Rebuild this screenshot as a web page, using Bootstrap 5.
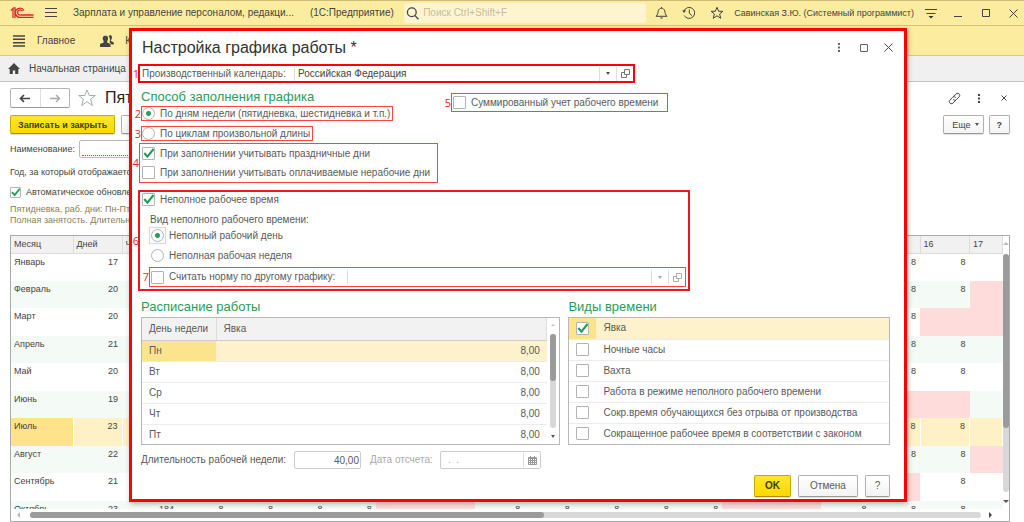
<!DOCTYPE html>
<html lang="ru">
<head>
<meta charset="utf-8">
<meta name="viewport" content="width=device-width, initial-scale=1">
<title>Настройка графика работы</title>
<link href="https://cdn.jsdelivr.net/npm/bootstrap@5.3.0/dist/css/bootstrap.min.css" rel="stylesheet">
<style>
:root{--sun:#fbec9f;--line:#b5b5b5;--ink:#444;--green:#2a9c58;--mark:#f00}
body{font:10px/14px "Liberation Sans",Arial,sans-serif;color:var(--ink);background:#fff;overflow:hidden}
svg{display:block;flex:none;fill:none;stroke:#444;stroke-width:1}
button,input{font:inherit;color:inherit}
.icon-btn{border:0;background:none;padding:0;display:flex;align-items:center;justify-content:center}
.small-text{font-size:9px;line-height:11px}
.app{min-height:100vh;position:relative}

.title-bar{height:26px;background:var(--sun);border-top:1px solid #cdbb78;border-bottom:1px solid #d3c27c;padding:0 6px 0 10px}
.title-bar .caption{font-size:10px;margin-left:16px;white-space:pre}
.search-box{background:#fef5d0;border-radius:3px;width:242px;height:20px;padding-left:2px}
.search-box input{border:0;background:none;outline:0;width:100%;padding:0 0 0 4px}
.search-box input::placeholder{color:#c4bda0;opacity:1}
.section-bar{height:30px;background:var(--sun);border-bottom:1px solid #d8c988;padding-left:13px}
.section-bar a,.tab-bar a{color:var(--ink);text-decoration:none}
.tab-bar{height:26px;background:#f0f0f0;border-bottom:1px solid #c6c6c6;padding-left:8px}

.work{padding:6px 14px 0 10px}
.nav-pair{height:20px;width:60px;border:1px solid #b4b4b4;border-bottom-color:#999;border-radius:2px}
.nav-pair button{flex:1}
.nav-pair button+button{border-left:1px solid #ddd}
.form-title{font-size:16px;line-height:20px;color:#222;font-weight:400;margin:0}
.push{height:19px;border:1px solid #b0b0b0;border-bottom-color:#999;border-radius:2px;background:linear-gradient(#fff,#f3f3f3);font-size:9px;line-height:12px;padding:0 7px;box-shadow:0 1px 1px #0002}
.push-main{background:linear-gradient(#ffe52e,#fcd900);border-color:#c9ab00;border-bottom-color:#a88f00;font-weight:700;color:#40400a}
.name-input{border:1px solid #bbb;border-radius:2px;height:18px;width:300px}
.name-input input{display:block;border:0;border-bottom:1px dotted #e33;outline:0;width:96%;height:15px;margin:0 2px}
.hint{color:#8b8052}

.tick,.dot{appearance:none;flex:none;margin:0;background:#fff no-repeat center;border:1px solid #b3b3b3;width:13px;height:13px;border-radius:1px}
.tick:checked{background-image:url("data:image/svg+xml,%3Csvg xmlns='http://www.w3.org/2000/svg' viewBox='0 0 13 13'%3E%3Cpath d='M2.3 6 5.4 9.6 11.6 2' fill='none' stroke='%231f9d55' stroke-width='2.1'/%3E%3C/svg%3E");background-origin:border-box;background-size:13px}
.tick-sm{width:11px;height:11px}
.tick-sm:checked{background-size:11px}
.dot{border-radius:50%}
.dot:checked{background-image:radial-gradient(circle,var(--green) 0 2px,#0000 3px)}

.sheet-box{margin-top:9px;border:1px solid #aaa;height:287px}
.sheet-view{height:273px;overflow:hidden}
.sheet{table-layout:fixed;width:100%;height:292px;border-collapse:collapse;font-size:9px;line-height:11px}
.sheet th{font-weight:400;background:#f1f1f1;border-right:1px solid #dcdcdc;border-bottom:1px solid #ddd;height:17px;padding:0 3px}
.sheet td{vertical-align:top;height:27px;padding:3px 4px 0;text-align:right}
.sheet td:first-child{text-align:left;padding-left:3px}
.sheet tbody tr:nth-child(even){background:#f4faf6}
.sheet tbody tr.current{background:#fef1c5}
.sheet tr.current td{border-right:1px solid #fff}
.sheet tr.current td:first-child{background:#ffe38b}
.sheet td.off{background:#ffdcdc}
.c-month{width:62px}.c-days{width:49px}.c-hours{width:56px}.c-cut{width:33px}
.v-scroll{width:12px;padding:6px 0 2px}
.sheet-box .v-scroll{padding-bottom:6px}
.rail{background:#d8d8d8;border-radius:3px;display:flex}
.rail i{background:#9b9b9b;border-radius:3px;display:block}
.v-scroll .rail{width:6px;flex-direction:column}
.h-scroll{height:12px;padding:0 17px 0 6px}
.h-scroll .rail{height:6px}
.arr{border:3px solid #0000;width:0;height:0}
.arr-u{border-bottom-color:#bbb;border-top:0}.arr-d{border-top-color:#555;border-bottom:0}
.arr-l{border-right-color:#bbb;border-left:0}.arr-r{border-left-color:#444;border-right:0}
.arr-s{border-width:2px;border-top-width:3px}

.dialog-pane{position:absolute;top:28px;left:129px;right:117px;background:#fff;border:3px solid var(--mark);height:474px;box-shadow:1px 2px 5px #0004;color:#5a5a5a}
.dialog-head{height:33px;padding:0 8px 0 10px}
.dialog-head h1{font-size:16px;line-height:20px;color:#333;margin:0;font-weight:400}
.dialog-pane h2{font-size:13px;line-height:14px;color:var(--green);margin:0;font-weight:400}
.marked{position:relative;border:1px solid #f44}
.marked-bold{border:2px solid #f0141e}
.marked>.num{position:absolute;right:100%;top:50%;margin:-6px 1px 0 0;color:#f22;font:11px/12px "Open Sans",sans-serif}
.opt{display:flex;align-items:center;gap:5px;white-space:nowrap}
.opt label{line-height:12px}
.field-in{border:0;border-left:1px solid #ddd;outline:0;background:none;min-width:0;flex:1;padding:0 3px;height:14px;color:#444}
.field-btn{width:17px;border-left:1px solid #ddd;height:14px}
.field-date .field-in{border-left:0}
.mid{padding:0 14px 0 9px;column-gap:8px}
.list-box{border:1px solid #b8b8b8;height:128px;overflow:hidden}
.list-box table{width:100%;border-collapse:collapse;table-layout:fixed}
.list-box td,.list-box th{height:21px;padding:0 7px;border-bottom:1px solid #ececec;font-weight:400;line-height:12px}
.list-box th{height:22px;background:#f2f2f2;border-color:#ccc;border-right:1px solid #ddd}
.list-box tr:last-child td{border-bottom:0}
.list-box tr.current td{background:#fdf2cb}
.list-box tr.current td:first-child{background:#fce48f}
.boxed{border:1px solid #ccc;border-radius:2px;height:18px}
.dialog-foot{padding:0 14px 0 9px}
.dialog-foot .push{height:22px;font-size:10px}
</style>
</head>
<body>
<div class="app d-flex flex-column">
  <header class="title-bar d-flex align-items-center">
    <svg width="24" height="12" viewBox="0 0 24 12" style="stroke:#e0262c;stroke-width:1.3"><path d="M.8 3.600 3 1.700V11M5 11V.8H3M14 3.400A4.600 4.600 0 1 0 11 10.300H23.500M12.500 4.300A2.600 2.600 0 1 0 11 8H23.500"/></svg>
    <button class="icon-btn" style="margin-left:11px" aria-label="Меню"><svg width="12" height="12" viewBox="0 0 12 12"><path d="M0 1.500h12M0 5.500h12M0 9.500h12"/></svg></button>
    <span class="caption">Зарплата и управление персоналом, редакци...</span>
    <span class="caption">(1С:Предприятие)</span>
    <div class="search-box d-flex align-items-center ms-auto">
      <svg width="13" height="13" viewBox="0 0 13 13" style="stroke-width:1.3"><circle cx="5.8" cy="5.3" r="4.4"/><path d="m9 8.6 3.4 3.6"/></svg>
      <input type="text" placeholder="Поиск Ctrl+Shift+F" aria-label="Поиск">
    </div>
    <button class="icon-btn" style="margin-left:9px" aria-label="Уведомления"><svg width="13" height="14" viewBox="0 0 13 14"><path d="M1 10.3h11C10 8.8 10.3 6.500 9.700 4.800 9.300 3.200 8 2.300 6.500 2.300S3.700 3.200 3.300 4.800C2.700 6.500 3 8.800 1 10.300zM6.500 1v1.300"/><path d="M4.800 11.500h3.400L6.500 13z" fill="#444" stroke="none"/></svg></button>
    <button class="icon-btn" style="margin-left:14px" aria-label="История"><svg width="14" height="14" viewBox="0 0 14 14"><path d="M2 5A5.500 5.500 0 1 1 2.300 9.500M7.300 3.500v3.800l2.500 2.200"/><path d="M.3 4.300h3.800L2 7z" fill="#444" stroke="none"/></svg></button>
    <button class="icon-btn" style="margin-left:14px" aria-label="Избранное"><svg width="14" height="14" viewBox="0 0 14 14"><path d="m7 1.300 1.700 4h4.200L9.600 8l1.200 4.300L7 9.800l-3.800 2.500L4.400 8 1.100 5.300h4.200z"/></svg></button>
    <span class="small-text text-nowrap" style="margin-left:10px">Савинская З.Ю. (Системный программист)</span>
    <button class="icon-btn" style="margin-left:11px" aria-label="Настройки"><svg width="12" height="12" viewBox="0 0 12 12"><path d="M0 2.500h12M1.500 6.500h9"/><path d="M3.500 9h5L6 11.500z" fill="#333" stroke="none"/></svg></button>
    <button class="icon-btn" style="margin-left:17px" aria-label="Свернуть"><svg width="8" height="10" viewBox="0 0 8 10"><path d="M0 8.500h8"/></svg></button>
    <button class="icon-btn" style="margin-left:20px" aria-label="Развернуть"><svg width="8" height="8" viewBox="0 0 8 8"><path d="M.5.5h7v7h-7z"/></svg></button>
    <button class="icon-btn" style="margin-left:19px" aria-label="Закрыть"><svg width="9" height="9" viewBox="0 0 9 9"><path d="m.5.500 8 8m0-8-8 8"/></svg></button>
  </header>
  <nav class="section-bar d-flex align-items-center">
    <svg width="12" height="12" viewBox="0 0 12 12" style="stroke-width:1.500"><path d="M0 1h12M0 4.300h12M0 7.700h12M0 11h12"/></svg>
    <a href="#" style="margin-left:12px">Главное</a>
    <svg width="14" height="12" viewBox="0 0 14 12" style="fill:#444;stroke:none;margin-left:25px"><path d="M8.500.8Q11-.4 12 1.500 12 4 11 5V6L13.800 7.500V9.500H11.500L9.500 7.200Q10.800 4 8.500.8z"/><path d="M2.800 2.500C3 .3 7.800.3 8 2.500 8.300 4.500 7.700 5.500 7.200 6.200V7.500L10.500 9V12H0V9L3.700 7.500V6.200C3.200 5.500 2.500 4.500 2.800 2.500z"/></svg>
    <a href="#" style="margin-left:11px">К</a>
  </nav>
  <nav class="tab-bar d-flex align-items-center">
    <svg width="12" height="11" viewBox="0 0 12 11" style="fill:#444;stroke:none"><path d="M6 0 12 6H10.300V11H7.200V7.500H4.800V11H1.700V6H0z"/></svg>
    <a href="#" style="margin-left:9px">Начальная страница</a>
  </nav>

  <main class="work flex-grow-1">
    <div class="d-flex align-items-center">
      <div class="nav-pair d-flex">
        <button class="icon-btn" aria-label="Назад"><svg width="12" height="9" viewBox="0 0 12 9" style="stroke-width:1.700"><path d="M1.500 4.500H11M5 1 1.500 4.500 5 8"/></svg></button>
        <button class="icon-btn" aria-label="Вперед"><svg width="12" height="9" viewBox="0 0 12 9" style="stroke:#aaa;stroke-width:1.400"><path d="M1 4.500h9.500M7 1l3.500 3.500L7 8"/></svg></button>
      </div>
      <svg width="18" height="18" viewBox="0 0 18 18" style="stroke:#a3a9b3;margin-left:8px"><path d="m9 1 2.300 5.500h6L12.600 10l1.700 6.500L9 12.700l-5.300 3.800L5.400 10 .7 6.500h6z"/></svg>
      <h2 class="form-title" style="margin-left:9px">Пят</h2>
      <button class="icon-btn ms-auto" aria-label="Ссылка"><svg width="13" height="13" viewBox="0 0 13 13"><path d="M5.200 4.800 7.800 2C10-.2 13.200 2.800 11 5L8.500 7.600C7.300 8.700 5.800 8.300 5.200 7.200M7.800 8.200 5.200 11C3 13.200-.2 10.200 2 8L4.500 5.400C5.700 4.300 7.200 4.700 7.800 5.800"/></svg></button>
      <button class="icon-btn" style="margin-left:17px" aria-label="Еще"><svg width="3" height="11" viewBox="0 0 3 11" style="fill:#444;stroke:none"><path d="M0 1h2v2H0zM0 4.500h2v2H0zM0 8h2v2H0z"/></svg></button>
      <button class="icon-btn" style="margin:0 3px 0 20px" aria-label="Закрыть форму"><svg width="6" height="6" viewBox="0 0 6 6"><path d="m.5.500 5 5m0-5-5 5"/></svg></button>
    </div>
    <div class="d-flex align-items-center" style="margin-top:7px">
      <button class="push push-main text-nowrap">Записать и закрыть</button>
      <button class="push" style="margin-left:6px;width:60px" aria-label="Записать"></button>
      <button class="push ms-auto d-flex align-items-center gap-1 ps-2 pe-1">Еще <i class="arr arr-d arr-s"></i></button>
      <button class="push fw-bold" style="margin-left:5px">?</button>
    </div>
    <div class="d-flex align-items-center small-text" style="margin-top:6px">
      <label for="nm">Наименование:</label>
      <div class="name-input ms-1"><input id="nm" type="text"></div>
    </div>
    <div class="small-text" style="margin-top:9px">Год, за который отображаетс</div>
    <div class="opt small-text" style="margin-top:8px"><input class="tick tick-sm" type="checkbox" id="auto" checked><label for="auto">Автоматическое обновле</label></div>
    <div class="small-text hint" style="margin-top:6px">Пятидневка, раб. дни: Пн-Пт,<br>Полная занятость. Длительн</div>

    <div class="sheet-box">
      <div class="d-flex">
        <div class="sheet-view flex-grow-1">
          <table class="sheet">
            <colgroup><col class="c-month"><col class="c-days"><col class="c-hours"><col span="16"><col class="c-cut"></colgroup>
            <thead><tr><th>Месяц</th><th>Дней</th><th>Ч</th><th colspan="14"></th><th></th><th>16</th><th>17</th></tr></thead>
            <tbody>
              <tr><td>Январь</td><td>17</td><td></td><td colspan="14"></td><td>8</td><td>8</td><td></td></tr>
              <tr><td>Февраль</td><td>20</td><td></td><td colspan="14"></td><td>8</td><td>8</td><td class="off"></td></tr>
              <tr><td>Март</td><td>20</td><td></td><td colspan="14"></td><td>8</td><td class="off"></td><td class="off"></td></tr>
              <tr><td>Апрель</td><td>21</td><td></td><td colspan="14"></td><td>8</td><td>8</td><td></td></tr>
              <tr><td>Май</td><td>20</td><td></td><td colspan="14"></td><td>8</td><td>8</td><td></td></tr>
              <tr><td>Июнь</td><td>19</td><td></td><td colspan="14"></td><td class="off"></td><td class="off"></td><td></td></tr>
              <tr class="current"><td>Июль</td><td>23</td><td></td><td colspan="14"></td><td>8</td><td>8</td><td></td></tr>
              <tr><td>Август</td><td>22</td><td></td><td colspan="14"></td><td>8</td><td>8</td><td class="off"></td></tr>
              <tr><td>Сентябрь</td><td>21</td><td></td><td colspan="14"></td><td class="off"></td><td>8</td><td></td></tr>
              <tr><td>Октябрь</td><td>23</td><td>184</td><td>8</td><td>8</td><td>8</td><td>8</td><td class="off"></td><td class="off"></td><td>8</td><td>8</td><td>8</td><td>8</td><td>8</td><td class="off"></td><td class="off"></td><td>8</td><td>8</td><td>8</td><td></td></tr>
            </tbody>
          </table>
        </div>
        <div class="v-scroll d-flex flex-column align-items-center">
          <i class="arr arr-u"></i>
          <div class="rail flex-grow-1" style="margin:9px 0 8px"><i style="height:73%"></i></div>
          <i class="arr arr-d"></i>
        </div>
      </div>
      <div class="h-scroll d-flex align-items-center">
        <i class="arr arr-l"></i>
        <div class="rail flex-grow-1" style="margin:0 8px 0 10px"><i style="width:54%"></i></div>
        <i class="arr arr-r"></i>
      </div>
    </div>
  </main>

  <section class="dialog-pane" role="dialog" aria-labelledby="dlg">
    <div class="dialog-head d-flex align-items-center">
      <h1 id="dlg">Настройка графика работы *</h1>
      <button class="icon-btn ms-auto" aria-label="Еще"><svg width="3" height="11" viewBox="0 0 3 11" style="fill:#666;stroke:none"><path d="M0 1h2v2H0zM0 4.500h2v2H0zM0 8h2v2H0z"/></svg></button>
      <button class="icon-btn" style="margin-left:19px" aria-label="Развернуть окно"><svg width="8" height="8" viewBox="0 0 8 8" style="stroke:#666"><path d="M.5.500h7v7h-7z"/></svg></button>
      <button class="icon-btn" style="margin:0 3px 0 16px" aria-label="Закрыть окно"><svg width="9" height="9" viewBox="0 0 9 9"><path d="m.5.500 8 8m0-8-8 8"/></svg></button>
    </div>

    <div class="marked marked-bold d-flex align-items-center" style="margin-left:6px;max-width:497px;height:19px;border-color:#f00">
      <span class="num">1</span>
      <label for="cal" style="width:154px;padding-left:2px">Производственный календарь:</label>
      <input class="field-in" id="cal" type="text" value="Российская Федерация">
      <button class="icon-btn field-btn" aria-label="Выбрать"><i class="arr arr-d arr-s"></i></button>
      <button class="icon-btn field-btn" aria-label="Открыть"><svg width="9" height="9" viewBox="0 0 9 9" style="stroke:#777"><path d="M3.500.5h5v5h-5zM3.500 3.500h-3v5h5v-3"/></svg></button>
    </div>

    <div class="d-flex align-items-start" style="margin:7px 0 0 9px">
      <div style="width:310px">
        <h2>Способ заполнения графика</h2>
        <div style="width:max-content;margin-top:2px;padding-right:2px" class="marked"><span class="num">2</span>
          <div class="opt"><input class="dot" type="radio" name="way" id="w1" checked><label for="w1">По дням недели (пятидневка, шестидневка и т.п.)</label></div></div>
        <div style="width:max-content;margin-top:5px;padding-right:2px" class="marked"><span class="num">3</span>
          <div class="opt"><input class="dot" type="radio" name="way" id="w2"><label for="w2">По циклам произвольной длины</label></div></div>
      </div>
      <div class="marked" style="margin-top:3px;padding:2px 9px 2px 1px"><span class="num">5</span>
        <div class="opt"><input class="tick" type="checkbox" id="sum"><label for="sum">Суммированный учет рабочего времени</label></div></div>
    </div>

    <div class="marked d-flex flex-column justify-content-around" style="margin:2px 0 0 7px;width:max-content;height:40px;padding:0 7px 0 2px"><span class="num">4</span>
      <div class="opt"><input class="tick" type="checkbox" id="hol" checked><label for="hol">При заполнении учитывать праздничные дни</label></div>
      <div class="opt"><input class="tick" type="checkbox" id="paid"><label for="paid">При заполнении учитывать оплачиваемые нерабочие дни</label></div>
    </div>

    <div class="marked marked-bold" style="margin:7px 0 0 6px;max-width:552px;padding:1px 2px 2px"><span class="num">6</span>
      <div class="opt"><input class="tick" type="checkbox" id="part" checked><label for="part">Неполное рабочее время</label></div>
      <div style="padding:7px 0 0 7px">
        <div style="padding-left:1px">Вид неполного рабочего времени:</div>
        <div class="opt" style="gap:3px"><span class="d-flex" style="border:1px solid #fbdc78;padding:1px"><input class="dot" type="radio" name="kind" id="k1" checked></span><label for="k1">Неполный рабочий день</label></div>
        <div class="opt" style="margin-top:5px;padding-left:2px"><input class="dot" type="radio" name="kind" id="k2"><label for="k2">Неполная рабочая неделя</label></div>
        <div class="marked opt" style="margin-top:5px;height:20px;padding-left:1px"><span class="num">7</span>
          <input class="tick" type="checkbox" id="norm"><label for="norm" style="width:173px">Считать норму по другому графику:</label>
          <span class="d-flex flex-grow-1"><input class="field-in" type="text" aria-label="График">
          <button class="icon-btn field-btn" aria-label="Выбрать график"><i class="arr arr-d arr-s" style="border-top-color:#aaa"></i></button>
          <button class="icon-btn field-btn" aria-label="Открыть график"><svg width="9" height="9" viewBox="0 0 9 9" style="stroke:#aaa"><path d="M3.500.5h5v5h-5zM3.500 3.500h-3v5h5v-3"/></svg></button></span>
        </div>
      </div>
    </div>

    <div class="mid d-flex" style="margin-top:9px">
      <div style="flex:420 1 0">
        <h2>Расписание работы</h2>
        <div class="list-box d-flex" style="margin-top:3px">
          <table>
            <colgroup><col style="width:74px"><col></colgroup>
            <thead><tr><th>День недели</th><th>Явка</th></tr></thead>
            <tbody class="text-end">
              <tr class="current"><td class="text-start">Пн</td><td>8,00</td></tr>
              <tr><td class="text-start">Вт</td><td>8,00</td></tr>
              <tr><td class="text-start">Ср</td><td>8,00</td></tr>
              <tr><td class="text-start">Чт</td><td>8,00</td></tr>
              <tr><td class="text-start">Пт</td><td>8,00</td></tr>
            </tbody>
          </table>
          <div class="v-scroll d-flex flex-column align-items-center flex-shrink-0">
            <i class="arr arr-u arr-s"></i>
            <div class="rail flex-grow-1" style="margin:8px 0 7px"><i style="height:50%"></i></div>
            <i class="arr arr-d arr-s mb-1"></i>
          </div>
        </div>
      </div>
      <div style="flex:322 1 0">
        <h2>Виды времени</h2>
        <div class="list-box" style="margin-top:3px">
          <table>
            <colgroup><col style="width:27px"><col></colgroup>
            <tbody>
              <tr class="current"><td><input class="tick d-block" type="checkbox" id="t1" checked></td><td><label for="t1">Явка</label></td></tr>
              <tr><td><input class="tick d-block" type="checkbox" id="t2"></td><td><label for="t2">Ночные часы</label></td></tr>
              <tr><td><input class="tick d-block" type="checkbox" id="t3"></td><td><label for="t3">Вахта</label></td></tr>
              <tr><td><input class="tick d-block" type="checkbox" id="t4"></td><td><label for="t4">Работа в режиме неполного рабочего времени</label></td></tr>
              <tr><td><input class="tick d-block" type="checkbox" id="t5"></td><td><label for="t5">Сокр.время обучающихся без отрыва от производства</label></td></tr>
              <tr><td><input class="tick d-block" type="checkbox" id="t6"></td><td><label for="t6">Сокращенное рабочее время в соответствии с законом</label></td></tr>
            </tbody>
          </table>
        </div>
      </div>
    </div>

    <div class="dialog-foot d-flex align-items-center" style="margin-top:6px">
      <label for="len" style="width:153px">Длительность рабочей недели:</label>
      <input class="boxed text-end" style="width:67px;padding:0 1px" id="len" type="text" value="40,00">
      <label for="dt" style="margin-left:9px;width:70px;color:#aaa">Дата отсчета:</label>
      <div class="boxed field-date d-flex align-items-center" style="width:101px">
        <input class="field-in" id="dt" type="text" value=".  ." style="color:#aaa;padding-left:7px">
        <button class="icon-btn field-btn" aria-label="Календарь"><svg width="9" height="9" viewBox="0 0 9 9" style="stroke:#999"><path d="M.5 1.500h8v7h-8zM0 2.500h9M.5 4.500h8M.5 6.500h8M2.500 3v6M4.500 3v6M6.500 3v6M2.500 0v2M6.500 0v2"/></svg></button>
      </div>
    </div>
    <div class="dialog-foot d-flex justify-content-end" style="margin-top:6px;column-gap:7px">
      <button class="push push-main" style="width:37px">OK</button>
      <button class="push" style="width:60px">Отмена</button>
      <button class="push" style="width:25px">?</button>
    </div>
  </section>
</div>
<script src="https://cdn.jsdelivr.net/npm/bootstrap@5.3.0/dist/js/bootstrap.bundle.min.js"></script>
</body>
</html>
